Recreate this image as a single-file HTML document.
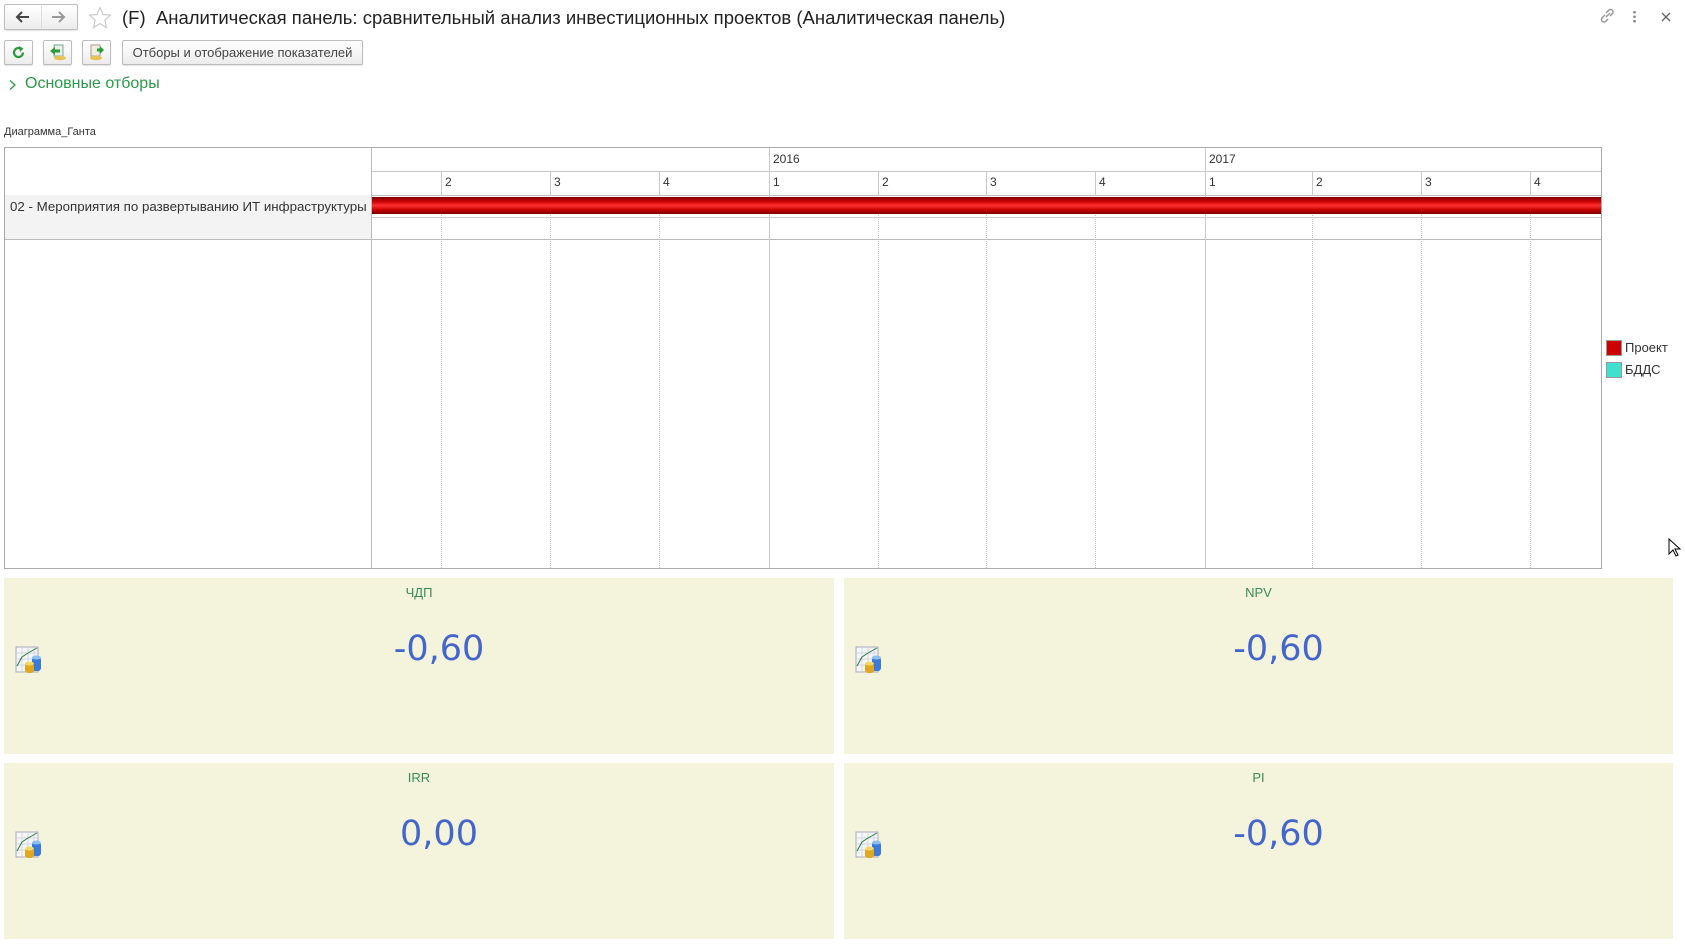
<!DOCTYPE html>
<html><head><meta charset="utf-8"><style>
*{margin:0;padding:0;box-sizing:border-box}
body{width:1685px;height:948px;background:#fff;position:relative;overflow:hidden;font-family:"Liberation Sans",Arial,sans-serif;color:#333}
.a{position:absolute}
.btn{position:absolute;border:1px solid #bdbdbd;border-radius:2px;background:linear-gradient(#fff,#ececec);box-shadow:0 1px 1px rgba(0,0,0,.12)}
.vl{position:absolute;top:0;bottom:0;width:0;border-left:1px solid #c8c8c8}
.dl{position:absolute;width:0;border-left:1px dotted #c8c8c8}
.card{position:absolute;background:#f4f4dc}
.ct{position:absolute;left:0;right:0;top:7px;text-align:center;font-size:13px;color:#3a8a55}
.cv{position:absolute;left:0;right:0;top:51px;text-align:center;font-family:"DejaVu Sans",sans-serif;font-size:35px;color:#4466cc;padding-left:40px}
.ic{position:absolute;left:11px;top:68px}
</style></head><body>
<div class="btn" style="left:4px;top:4px;width:74px;height:26px"></div>
<div class="a" style="left:41px;top:6px;height:22px;border-left:1px solid #ddd"></div>
<svg class="a" style="left:14px;top:10px" width="16" height="14"><path d="M15 7H3M8 2L3 7l5 5" stroke="#444" stroke-width="2" fill="none"/></svg>
<svg class="a" style="left:51px;top:10px" width="16" height="14"><path d="M1 7h12M8 2l5 5-5 5" stroke="#999" stroke-width="2" fill="none"/></svg>
<svg class="a" style="left:88px;top:6px" width="24" height="23"><path d="M12 1.5l3 7 7.5.6-5.7 5 1.8 7.4L12 17.6 5.4 21.5l1.8-7.4-5.7-5 7.5-.6z" fill="none" stroke="#ccc" stroke-width="1.2"/></svg>
<div class="a" style="left:122px;top:7px;font-size:18.5px;color:#222;white-space:nowrap">(F)&nbsp; Аналитическая панель: сравнительный анализ инвестиционных проектов (Аналитическая панель)</div>
<svg class="a" style="left:1598px;top:7px" width="18" height="18"><g fill="none" stroke="#999" stroke-width="1.5"><path d="M8 10l4-4"/><path d="M7 8L4 11a2.5 2.5 0 0 0 3.5 3.5L10 12"/><path d="M8 6l3-3a2.5 2.5 0 0 1 3.5 3.5L12 9"/></g></svg>
<div class="a" style="left:1633px;top:10px;width:3px;height:13px;background:radial-gradient(circle,#888 1.2px,transparent 1.5px) 0 0/3px 4.5px"></div>
<svg class="a" style="left:1660px;top:11px" width="12" height="12"><path d="M2 2l8 8M10 2l-8 8" stroke="#666" stroke-width="1.3"/></svg>
<div class="btn" style="left:4px;top:40px;width:29px;height:25px"></div>
<svg class="a" style="left:11px;top:45px" width="15" height="15"><path d="M12 7.5A4.5 4.5 0 1 1 9.5 3.5" stroke="#2a9a3a" stroke-width="2.2" fill="none"/><path d="M8 1l4.5 2.5L9 7z" fill="#2a9a3a"/></svg>
<div class="btn" style="left:43px;top:40px;width:29px;height:25px"></div>
<svg class="a" style="left:49px;top:43px" width="18" height="18"><rect x="5" y="2" width="9" height="11" fill="#e8efe6" stroke="#7a9"/><path d="M1 8l5-4v2.5h5v3H6V12z" fill="#2a9a3a"/><ellipse cx="11" cy="15" rx="6" ry="2.3" fill="#e6c45a"/></svg>
<div class="btn" style="left:82px;top:40px;width:29px;height:25px"></div>
<svg class="a" style="left:88px;top:43px" width="18" height="18"><rect x="3" y="2" width="9" height="11" fill="#f0eee0" stroke="#a98"/><path d="M16 7l-4-4v2.5H9v3h3V11z" fill="#2a9a3a"/><ellipse cx="8" cy="15" rx="6" ry="2.3" fill="#e6c45a"/></svg>
<div class="btn" style="left:122px;top:40px;width:241px;height:25px"></div>
<div class="a" style="left:122px;top:45px;width:241px;text-align:center;font-size:13px;color:#444">Отборы и отображение показателей</div>
<svg class="a" style="left:8px;top:79px" width="10" height="12"><path d="M2 1.5l5 4.5-5 4.5" stroke="#2a9a4a" stroke-width="1.3" fill="none"/></svg>
<div class="a" style="left:25px;top:75px;font-size:16px;color:#2a9a4a">Основные отборы</div>
<div class="a" style="left:4px;top:126px;font-size:11px;color:#333">Диаграмма_Ганта</div>
<div class="a" style="left:4px;top:147px;width:1598px;height:422px;border:1px solid #aaa">
  <div class="a" style="left:0;top:47px;width:367px;height:45px;background:#f3f3f3"></div>
  <div class="a" style="left:0;top:91px;width:1596px;border-top:1px solid #bbb"></div>
  <div class="a" style="left:367px;top:23px;width:1229px;border-top:1px solid #c8c8c8"></div>
  <div class="a" style="left:367px;top:47px;width:1229px;border-top:1px solid #bbb"></div>
  <div class="a" style="left:367px;top:69px;width:1229px;border-top:1px solid #c8c8c8"></div>
  <div class="vl" style="left:366px;border-color:#bbb"></div>
  <div class="a" style="left:764px;top:0;height:47px;border-left:1px solid #c8c8c8"></div>
  <div class="a" style="left:1200px;top:0;height:47px;border-left:1px solid #c8c8c8"></div>
  <div class="a" style="left:768px;top:4px;font-size:12px">2016</div>
  <div class="a" style="left:1204px;top:4px;font-size:12px">2017</div>
  <div class="a" style="left:436px;top:23px;height:24px;border-left:1px solid #c8c8c8"></div><div class="dl" style="left:436px;top:47px;bottom:0"></div>
  <div class="a" style="left:545px;top:23px;height:24px;border-left:1px solid #c8c8c8"></div><div class="dl" style="left:545px;top:47px;bottom:0"></div>
  <div class="a" style="left:654px;top:23px;height:24px;border-left:1px solid #c8c8c8"></div><div class="dl" style="left:654px;top:47px;bottom:0"></div>
  <div class="vl" style="left:764px;top:23px"></div>
  <div class="a" style="left:873px;top:23px;height:24px;border-left:1px solid #c8c8c8"></div><div class="dl" style="left:873px;top:47px;bottom:0"></div>
  <div class="a" style="left:981px;top:23px;height:24px;border-left:1px solid #c8c8c8"></div><div class="dl" style="left:981px;top:47px;bottom:0"></div>
  <div class="a" style="left:1090px;top:23px;height:24px;border-left:1px solid #c8c8c8"></div><div class="dl" style="left:1090px;top:47px;bottom:0"></div>
  <div class="vl" style="left:1200px;top:23px"></div>
  <div class="a" style="left:1307px;top:23px;height:24px;border-left:1px solid #c8c8c8"></div><div class="dl" style="left:1307px;top:47px;bottom:0"></div>
  <div class="a" style="left:1416px;top:23px;height:24px;border-left:1px solid #c8c8c8"></div><div class="dl" style="left:1416px;top:47px;bottom:0"></div>
  <div class="a" style="left:1525px;top:23px;height:24px;border-left:1px solid #c8c8c8"></div><div class="dl" style="left:1525px;top:47px;bottom:0"></div>
  <div class="a" style="top:27px;left:440px;font-size:12px">2</div>
  <div class="a" style="top:27px;left:549px;font-size:12px">3</div>
  <div class="a" style="top:27px;left:658px;font-size:12px">4</div>
  <div class="a" style="top:27px;left:768px;font-size:12px">1</div>
  <div class="a" style="top:27px;left:877px;font-size:12px">2</div>
  <div class="a" style="top:27px;left:985px;font-size:12px">3</div>
  <div class="a" style="top:27px;left:1094px;font-size:12px">4</div>
  <div class="a" style="top:27px;left:1204px;font-size:12px">1</div>
  <div class="a" style="top:27px;left:1311px;font-size:12px">2</div>
  <div class="a" style="top:27px;left:1420px;font-size:12px">3</div>
  <div class="a" style="top:27px;left:1529px;font-size:12px">4</div>
  <div class="a" style="left:367px;top:49px;width:1229px;height:17px;background:linear-gradient(#7a0000,#c80000 25%,#ff3030 50%,#c80000 75%,#7a0000)"></div>
  <div class="a" style="left:5px;top:51px;font-size:13.3px;color:#333;white-space:nowrap">02 - Мероприятия по развертыванию ИТ инфраструктуры</div>
</div>
<div class="a" style="left:1606px;top:340px;width:16px;height:16px;background:#cc0000;border:1px solid #999"></div>
<div class="a" style="left:1625px;top:340px;font-size:13px">Проект</div>
<div class="a" style="left:1606px;top:362px;width:16px;height:16px;background:#40e0d0;border:1px solid #999"></div>
<div class="a" style="left:1625px;top:362px;font-size:13px">БДДС</div>
<svg class="a" style="left:1668px;top:538px" width="14" height="20"><path d="M1 1v15l4-4 3 6 2-1-3-6h5z" fill="#fff" stroke="#000"/></svg>
<svg width="0" height="0" style="position:absolute"><defs><g id="ico"><rect x="1" y="1" width="22" height="25" fill="#f4f6f8" stroke="#aab"/><path d="M1 7h22M1 13h22M1 19h22M7 1v25M13 1v25M19 1v25" stroke="#ccd" stroke-width=".7"/><path d="M2 20l5-9 6-4 9-5" stroke="#2a7a3a" fill="none"/><rect x="17" y="11" width="9" height="14" rx="3" fill="#3a7ad8"/><ellipse cx="21.5" cy="11.5" rx="4.5" ry="2" fill="#8ac0f0"/><rect x="10" y="17" width="9" height="10" rx="3" fill="#e0a820"/><ellipse cx="14.5" cy="17.5" rx="4.5" ry="2" fill="#f6d868"/></g></defs></svg>
<div class="card" style="left:4px;top:578px;width:830px;height:176px"><div class="ct">ЧДП</div><div class="cv">-0,60</div><svg class="ic" width="29" height="30"><use href="#ico"/></svg></div>
<div class="card" style="left:844px;top:578px;width:829px;height:176px"><div class="ct">NPV</div><div class="cv">-0,60</div><svg class="ic" width="29" height="30"><use href="#ico"/></svg></div>
<div class="card" style="left:4px;top:763px;width:830px;height:176px"><div class="ct">IRR</div><div class="cv">0,00</div><svg class="ic" width="29" height="30"><use href="#ico"/></svg></div>
<div class="card" style="left:844px;top:763px;width:829px;height:176px"><div class="ct">PI</div><div class="cv">-0,60</div><svg class="ic" width="29" height="30"><use href="#ico"/></svg></div>
</body></html>
